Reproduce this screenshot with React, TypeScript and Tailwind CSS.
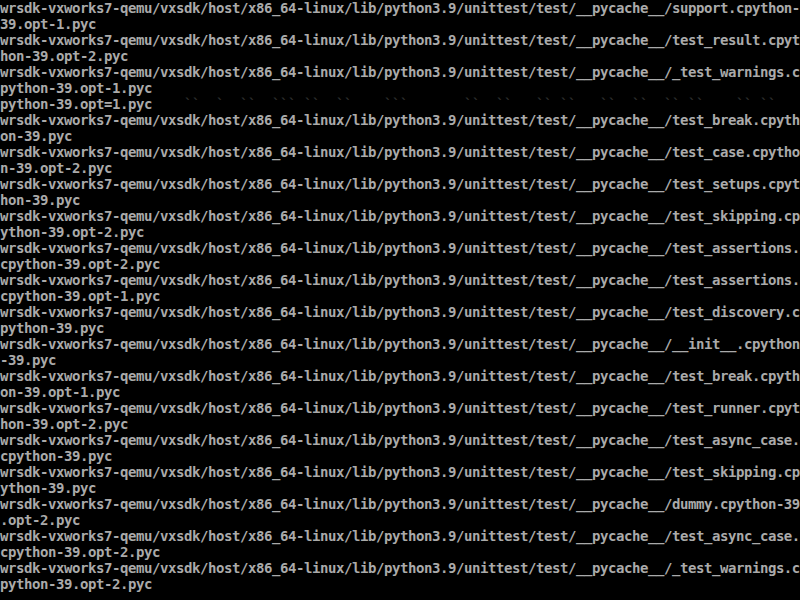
import React from "react";

const P = "wrsdk-vxworks7-qemu/vxsdk/host/x86_64-linux/lib/python3.9/unittest/test/__pycache__/";

const lines: string[] = [
  P + "support.cpython-",
  "39.opt-1.pyc",
  P + "test_result.cpyt",
  "hon-39.opt-2.pyc",
  P + "_test_warnings.c",
  "python-39.opt-1.pyc",
  "python-39.opt=1.pyc",
  P + "test_break.cpyth",
  "on-39.pyc",
  P + "test_case.cpytho",
  "n-39.opt-2.pyc",
  P + "test_setups.cpyt",
  "hon-39.pyc",
  P + "test_skipping.cp",
  "ython-39.opt-2.pyc",
  P + "test_assertions.",
  "cpython-39.opt-2.pyc",
  P + "test_assertions.",
  "cpython-39.opt-1.pyc",
  P + "test_discovery.c",
  "python-39.pyc",
  P + "__init__.cpython",
  "-39.pyc",
  P + "test_break.cpyth",
  "on-39.opt-1.pyc",
  P + "test_runner.cpyt",
  "hon-39.opt-2.pyc",
  P + "test_async_case.",
  "cpython-39.pyc",
  P + "test_skipping.cp",
  "ython-39.pyc",
  P + "dummy.cpython-39",
  ".opt-2.pyc",
  P + "test_async_case.",
  "cpython-39.opt-2.pyc",
  P + "_test_warnings.c",
  "python-39.opt-2.pyc",
];

const junk = "    ``  `  ``  ``` ``  ``    ```       ``  ``   `` ``   ``  ``  `` ``    `` ``";

export default function App() {
  return (
    <div
      className="w-[800px] h-[600px] bg-black overflow-hidden text-[#aaaaaa] text-[14px] leading-[16px] tracking-[-0.43px] font-bold whitespace-pre"
      style={{ fontFamily: '"DejaVu Sans Mono", "Liberation Mono", monospace' }}
    >
      {lines.map((l, i) => (
        <div key={i} className="h-[16px]">
          {l}
          {i === 6 ? <span className="text-[#2e2e2e]">{junk}</span> : null}
        </div>
      ))}
    </div>
  );
}
